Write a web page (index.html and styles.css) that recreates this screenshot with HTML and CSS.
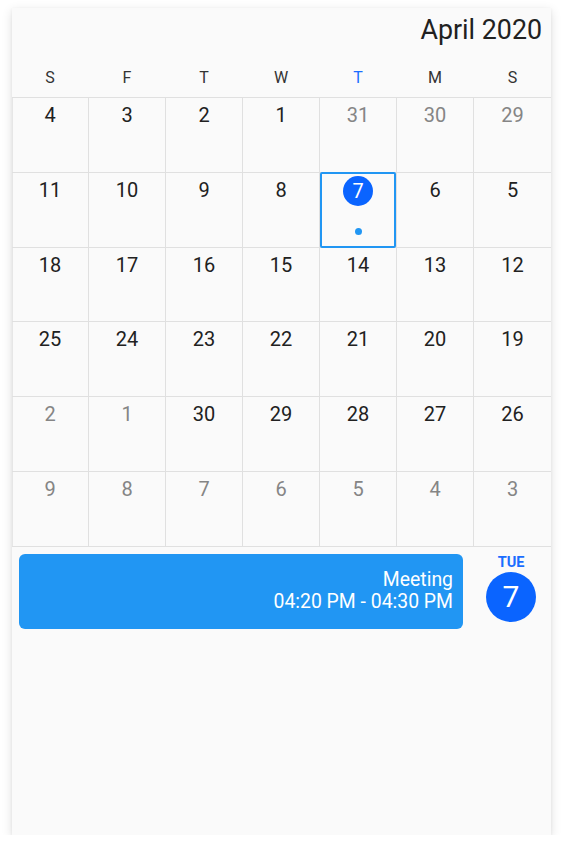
FILE: index.html
```html
<!DOCTYPE html>
<html lang="en">
<head>
<meta charset="utf-8">
<title>April 2020</title>
<link rel="stylesheet" href="styles.css">
</head>
<body>
<div class="card">
  <div class="title">April 2020</div>
  <div class="calendar">
    <div class="weekdays">
      <div class="wd">S</div><div class="wd">M</div><div class="wd today">T</div><div class="wd">W</div><div class="wd">T</div><div class="wd">F</div><div class="wd">S</div>
    </div>
    <div class="days">
      <div class="day other"><span class="num">29</span></div>
      <div class="day other"><span class="num">30</span></div>
      <div class="day other"><span class="num">31</span></div>
      <div class="day"><span class="num">1</span></div>
      <div class="day"><span class="num">2</span></div>
      <div class="day"><span class="num">3</span></div>
      <div class="day"><span class="num">4</span></div>

      <div class="day"><span class="num">5</span></div>
      <div class="day"><span class="num">6</span></div>
      <div class="day selected"><span class="num circle">7</span><span class="dot"></span></div>
      <div class="day"><span class="num">8</span></div>
      <div class="day"><span class="num">9</span></div>
      <div class="day"><span class="num">10</span></div>
      <div class="day"><span class="num">11</span></div>

      <div class="day"><span class="num">12</span></div>
      <div class="day"><span class="num">13</span></div>
      <div class="day"><span class="num">14</span></div>
      <div class="day"><span class="num">15</span></div>
      <div class="day"><span class="num">16</span></div>
      <div class="day"><span class="num">17</span></div>
      <div class="day"><span class="num">18</span></div>

      <div class="day"><span class="num">19</span></div>
      <div class="day"><span class="num">20</span></div>
      <div class="day"><span class="num">21</span></div>
      <div class="day"><span class="num">22</span></div>
      <div class="day"><span class="num">23</span></div>
      <div class="day"><span class="num">24</span></div>
      <div class="day"><span class="num">25</span></div>

      <div class="day"><span class="num">26</span></div>
      <div class="day"><span class="num">27</span></div>
      <div class="day"><span class="num">28</span></div>
      <div class="day"><span class="num">29</span></div>
      <div class="day"><span class="num">30</span></div>
      <div class="day other"><span class="num">1</span></div>
      <div class="day other"><span class="num">2</span></div>

      <div class="day other"><span class="num">3</span></div>
      <div class="day other"><span class="num">4</span></div>
      <div class="day other"><span class="num">5</span></div>
      <div class="day other"><span class="num">6</span></div>
      <div class="day other"><span class="num">7</span></div>
      <div class="day other"><span class="num">8</span></div>
      <div class="day other"><span class="num">9</span></div>
    </div>
  </div>
  <div class="agenda">
    <div class="date-col">
      <div class="dow">TUE</div>
      <div class="date-circle">7</div>
    </div>
    <div class="event">
      <div class="event-title">Meeting</div>
      <div class="event-time">04:20 PM - 04:30 PM</div>
    </div>
  </div>
</div>
</body>
</html>
```

FILE: styles.css
```css
* { box-sizing: border-box; }

html, body {
  margin: 0;
  padding: 0;
  background: #ffffff;
}

body {
  font-family: Roboto, "Liberation Sans", Arial, sans-serif;
  color: #212121;
}

.card {
  margin: 8px 0 0 12px;
  width: 539px;
  height: 827px;
  background: #fafafa;
  box-shadow: 0 3px 10px rgba(0, 0, 0, 0.13), 0 1px 3px rgba(0, 0, 0, 0.06);
}

.title {
  height: 44px;
  line-height: 44px;
  font-size: 26.8px;
  text-align: right;
  padding-right: 9px;
  color: #212121;
}

.calendar {
  direction: rtl;
}

.weekdays {
  display: grid;
  grid-template-columns: repeat(7, 77px);
  padding-top: 6px;
  height: 46px;
  border-bottom: 1px solid #e0e0e0;
}

.wd {
  text-align: center;
  font-size: 16px;
  line-height: 40px;
  padding-right: 1px;
  color: #333;
}

.wd:first-child {
  padding-right: 0;
}

.wd.today {
  color: #1a6dff;
}

.days {
  display: grid;
  grid-template-columns: repeat(7, 77px);
  grid-auto-rows: 74.8px;
}

.day {
  position: relative;
  display: flex;
  flex-direction: column;
  align-items: center;
  padding-top: 6px;
  border-right: 1px solid #e0e0e0;
  border-bottom: 1px solid #e0e0e0;
  font-size: 20px;
  color: #212121;
}

.day:nth-child(7n+1) {
  border-right: 0;
}

.day:nth-child(7n) {
  box-shadow: inset 1px 0 0 #e6e6e6;
}

.day.other {
  color: #858585;
}

.num {
  display: block;
  line-height: 23px;
  text-align: center;
}

.selected::after {
  content: "";
  position: absolute;
  top: -1px;
  left: 0;
  right: 0;
  bottom: -1px;
  border: 2px solid #2196f3;
  border-radius: 2px;
}

.num.circle {
  width: 30px;
  height: 30px;
  line-height: 30px;
  margin-top: -3px;
  border-radius: 50%;
  background: #0a64ff;
  color: #ffffff;
}

.dot {
  display: block;
  width: 7px;
  height: 7px;
  border-radius: 50%;
  background: #2196f3;
  margin-top: 22px;
}

.agenda {
  display: flex;
  flex-direction: row-reverse;
  padding: 7px 0 0 7px;
}

.event {
  flex: 0 0 444px;
  height: 75px;
  border-radius: 6px;
  background: #2196f3;
  color: #ffffff;
  text-align: right;
  padding: 15px 10px 0 0;
  font-size: 19.4px;
  line-height: 22px;
}

.date-col {
  flex: 1;
  margin-left: 8px;
  display: flex;
  flex-direction: column;
  align-items: center;
}

.dow {
  font-size: 14.5px;
  font-weight: 700;
  line-height: 17px;
  color: #1a6dff;
}

.date-circle {
  margin-top: 1px;
  width: 50px;
  height: 50px;
  border-radius: 50%;
  background: #0a64ff;
  color: #ffffff;
  font-size: 30px;
  line-height: 50px;
  text-align: center;
}
```
